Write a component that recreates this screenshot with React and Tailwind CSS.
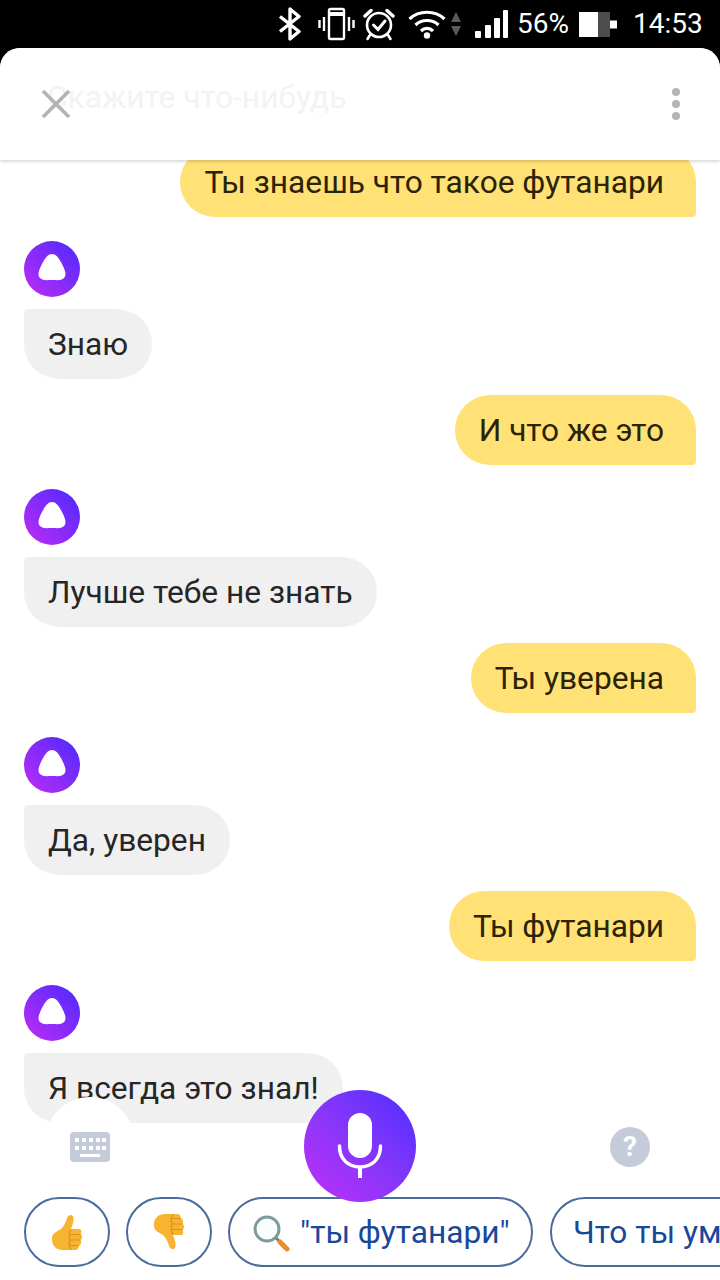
import { useId } from "react";

const messages = [
  { from: "bot", text: "Знаю" },
  { from: "me", text: "И что же это" },
  { from: "bot", text: "Лучше тебе не знать" },
  { from: "me", text: "Ты уверена" },
  { from: "bot", text: "Да, уверен" },
  { from: "me", text: "Ты футанари" },
  { from: "bot", text: "Я всегда это знал!" },
];

const Bluetooth = () => (
  <svg width="24" height="34" viewBox="0 0 24 34" fill="none" stroke="white" strokeWidth="3.4" strokeLinejoin="round">
    <path d="M2 9.5 L21 24.5 L12 32 V2 L21 9.5 L2 24.5" />
  </svg>
);

const Vibrate = () => (
  <svg width="37" height="34" viewBox="0 0 37 34" fill="none" stroke="white" strokeWidth="2.4">
    <rect x="11" y="2" width="15" height="30" rx="1.5" />
    <path d="M11 7 H26" strokeWidth="4" />
    <path d="M6 10 V24 M1.5 13 V21 M31 10 V24 M35.5 13 V21" />
  </svg>
);

const Alarm = () => (
  <svg width="32" height="34" viewBox="0 0 32 34" fill="none" stroke="white" strokeWidth="2.6" strokeLinecap="round">
    <circle cx="16" cy="18" r="12" />
    <path d="M10.5 18 L15 22.5 L22 14" strokeWidth="3" />
    <path d="M2 9 L8 3.5 M30 9 L24 3.5" strokeWidth="3.4" />
    <path d="M7 28 L4.5 32 M25 28 L27.5 32" />
  </svg>
);

const Wifi = () => (
  <svg width="38" height="30" viewBox="0 0 38 30" fill="none" stroke="white" strokeWidth="3.2">
    <path d="M1.5 10 C11 1 27 1 36.5 10" />
    <path d="M7.5 16 C13.5 10 24.5 10 30.5 16" />
    <path d="M13 22 C16.5 18.5 21.5 18.5 25 22" />
    <circle cx="19" cy="26.5" r="3.2" fill="white" stroke="none" />
  </svg>
);

const WifiArrows = () => (
  <svg width="10" height="24" viewBox="0 0 10 24" fill="#5a5a5a">
    <path d="M5 0 L10 10 H0 Z M0 14 H10 L5 24 Z" />
  </svg>
);

const Signal = () => (
  <svg width="33" height="28" viewBox="0 0 33 28" fill="white">
    <rect x="0" y="21" width="6" height="7" rx="1" />
    <rect x="10" y="15" width="6" height="13" rx="1" />
    <rect x="19" y="8" width="6" height="20" rx="1" />
    <rect x="28" y="0" width="5" height="28" rx="1" />
  </svg>
);

const Battery = () => (
  <svg width="38" height="25" viewBox="0 0 38 25">
    <rect x="0" y="0" width="31" height="25" fill="#4d4d4d" />
    <rect x="0" y="0" width="19" height="25" fill="white" />
    <rect x="31" y="8.5" width="7" height="8" fill="white" />
  </svg>
);

const AliceIcon = () => {
  const id = useId();
  return (
    <svg width="56" height="56" viewBox="0 0 56 56">
      <defs>
        <linearGradient id={id} x1="0" y1="1" x2="1" y2="0">
          <stop offset="0" stopColor="#c02bf5" />
          <stop offset="1" stopColor="#4a2bff" />
        </linearGradient>
      </defs>
      <circle cx="28" cy="28" r="28" fill={`url(#${id})`} />
      <path
        d="M28 13 C32 13 35 17 38 23 C41 29 43 34 40 37 C37 40 33 39 28 39 C23 39 19 40 16 37 C13 34 15 29 18 23 C21 17 24 13 28 13 Z"
        fill="white"
      />
    </svg>
  );
};

const Thumb = ({ down }) => (
  <svg width="30" height="36" viewBox="0 0 30 36" className={down ? "-scale-y-100" : ""}>
    <path
      d="M0 24 C0 19 6 17 9 15 C12 12 14 8 15 4 C16 0 21 0 21.5 3.5 C22 8 20 12 19 15 H27 C29.5 15 30 18 28.5 20 C30.5 21 30.5 25 28.5 26 C30 28 29 31 27 31.5 C27 34 25.5 36 23 36 H11 C4 36 0 31 0 26 Z"
      fill="#f6b430"
    />
    <path d="M19 15.5 L17 20 L18 26 L17 31 L19 36 M18 20.5 H28.5 M18.5 26 H28.5 M18 31.5 H27" stroke="#dd8f1e" strokeWidth="1.2" fill="none" />
  </svg>
);

const Bubble = ({ from, text }) => {
  if (from === "me") {
    return (
      <div className="flex justify-end mt-4">
        <div className="h-[70px] flex items-center pl-6 pr-8 pt-[2px] bg-[#ffe176] text-[#2b2305] rounded-l-[35px] rounded-tr-[35px] rounded-br-[4px]">
          {text}
        </div>
      </div>
    );
  }
  return (
    <div className="mt-6 flex flex-col items-start gap-3">
      <AliceIcon />
      <div className="h-[70px] flex items-center px-6 pt-[2px] bg-[#f0f0f0] text-[#262626] rounded-r-[35px] rounded-bl-[35px] rounded-tl-[4px]">
        {text}
      </div>
    </div>
  );
};

const Chip = ({ children, className }) => (
  <div className={`h-[70px] shrink-0 flex items-center rounded-[35px] border-2 border-[#4a6c9c] text-[#17489a] ${className}`}>
    {children}
  </div>
);

export default function App() {
  return (
    <div className="w-[720px] h-[1280px] bg-black flex flex-col overflow-hidden font-['Roboto',sans-serif] text-[31.7px] leading-none">
      <div className="h-12 shrink-0 flex items-center pl-[278px] text-white text-[28px]">
        <Bluetooth />
        <div className="ml-4"><Vibrate /></div>
        <div className="ml-2"><Alarm /></div>
        <div className="ml-[13px]"><Wifi /></div>
        <div className="ml-[5px]"><WifiArrows /></div>
        <div className="ml-[14px]"><Signal /></div>
        <span className="ml-[9px]">56%</span>
        <div className="ml-[10px]"><Battery /></div>
        <span className="ml-[16px]">14:53</span>
      </div>

      <div className="flex-1 bg-white rounded-t-[20px] flex flex-col min-h-0">
        <div className="h-[112px] shrink-0 relative z-10 bg-white rounded-t-[20px] shadow-[0_2px_3px_rgba(0,0,0,0.14)] flex items-center justify-between pl-[41px] pr-[40px]">
          <span className="absolute left-[47px] top-[34px] text-[#f3f3f3]">Скажите что-нибудь</span>
          <svg width="30" height="30" viewBox="0 0 30 30" stroke="#b3b3b3" strokeWidth="3.6" className="relative">
            <path d="M2 2 L28 28 M28 2 L2 28" />
          </svg>
          <div className="flex flex-col gap-1">
            <div className="w-2 h-2 rounded-full bg-[#b5b5b5]" />
            <div className="w-2 h-2 rounded-full bg-[#b5b5b5]" />
            <div className="w-2 h-2 rounded-full bg-[#b5b5b5]" />
          </div>
        </div>

        <div className="h-[963px] shrink-0 overflow-hidden px-6">
          <div className="-mt-[13px] flex justify-end">
            <div className="h-[70px] flex items-center pl-6 pr-8 pt-[2px] bg-[#ffe176] text-[#2b2305] rounded-l-[35px] rounded-tr-[35px] rounded-br-[4px]">
              Ты знаешь что такое футанари
            </div>
          </div>
          {messages.map((m) => (
            <Bubble key={m.text} from={m.from} text={m.text} />
          ))}
        </div>

        <div className="flex-1 relative bg-white">
          <div className="absolute left-[45px] -top-[26px] w-[90px] h-[90px] rounded-full bg-white" />
          <div className="relative h-12 flex items-center justify-between pl-[70px] pr-[70px]">
            <svg width="40" height="30" viewBox="0 0 40 30">
              <rect width="40" height="30" rx="4" fill="#c6cbd9" />
              <g fill="white">
                <rect x="5" y="6" width="4" height="4" />
                <rect x="12" y="6" width="4" height="4" />
                <rect x="19" y="6" width="4" height="4" />
                <rect x="26" y="6" width="4" height="4" />
                <rect x="32" y="6" width="4" height="4" />
                <rect x="5" y="14" width="4" height="4" />
                <rect x="12" y="14" width="4" height="4" />
                <rect x="19" y="14" width="4" height="4" />
                <rect x="26" y="14" width="4" height="4" />
                <rect x="32" y="14" width="4" height="4" />
                <rect x="10" y="22" width="20" height="3" />
              </g>
            </svg>
            <div className="w-10 h-10 rounded-full bg-[#c6cbd9] flex items-center justify-center text-white text-[28px] font-bold">
              ?
            </div>
          </div>

          <div className="mt-[26px] flex pl-6">
            <Chip className="w-[86px] justify-center"><Thumb /></Chip>
            <Chip className="ml-4 w-[86px] justify-center"><Thumb down /></Chip>
            <Chip className="ml-4 w-[305px] pl-[22px] gap-[10px] pt-[2px]">
              <svg width="38" height="38" viewBox="0 0 38 38" fill="none">
                <circle cx="15" cy="15" r="12" stroke="#7d9c9c" strokeWidth="3" fill="#fbfdfd" />
                <path d="M24 24 L28 28" stroke="#7d7d6c" strokeWidth="3" />
                <path d="M28 28 L35 35" stroke="#ee8a2a" strokeWidth="5" strokeLinecap="round" />
              </svg>
              <span>"ты футанари"</span>
            </Chip>
            <Chip className="ml-[17px] w-[260px] pl-[21px] pt-[2px]">Что ты умеешь</Chip>
          </div>

          <div className="absolute left-[304px] -top-[33px] w-[112px] h-[112px] rounded-full bg-gradient-to-tr from-[#c02bf5] to-[#4a2bff] flex items-center justify-center">
            <svg width="46" height="66" viewBox="0 0 46 66" fill="none">
              <rect x="11" y="0" width="24" height="45" rx="12" fill="white" />
              <path d="M2.5 33 C2.5 46 11 54 23 54 C35 54 43.5 46 43.5 33" stroke="white" strokeWidth="3.5" strokeLinecap="round" />
              <rect x="21" y="53" width="4" height="12" fill="white" />
            </svg>
          </div>
        </div>
      </div>
    </div>
  );
}
